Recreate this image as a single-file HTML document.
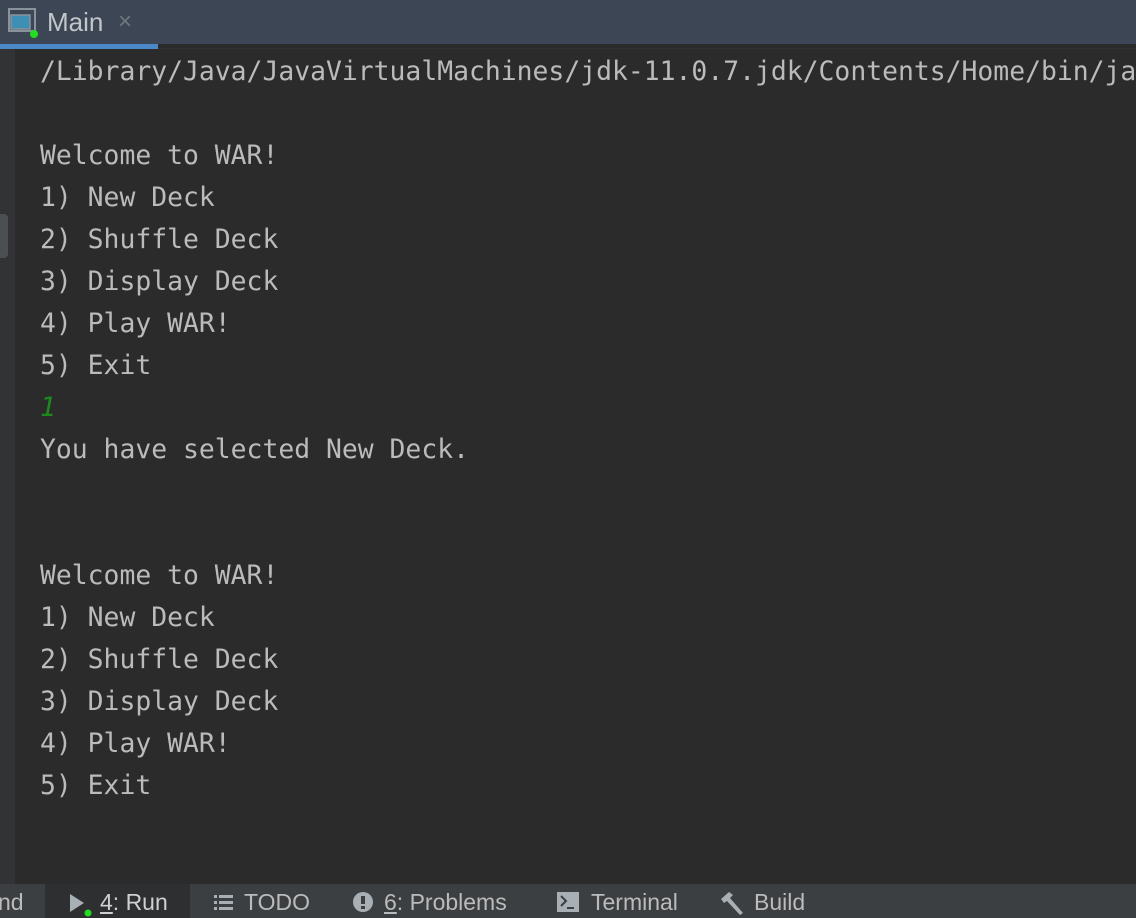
<!DOCTYPE html>
<html><head><style>
body{margin:0;width:1136px;height:918px;overflow:hidden;background:#2b2b2b;position:relative;font-family:"Liberation Sans",sans-serif}
#tabs{position:absolute;left:0;top:0;width:1136px;height:44px;background:#3d4655}
#ul{position:absolute;left:0;top:44px;width:158px;height:5px;background:#4a88c7}
#tabline{position:absolute;left:158px;top:48px;width:978px;height:1px;background:#323232}
#gutter{position:absolute;left:0;top:49px;width:15px;height:835px;background:#313335}
#thumb{position:absolute;left:0;top:214px;width:8px;height:44px;background:#4b4f52;border-radius:0 4px 4px 0}
pre{position:absolute;left:40px;top:51px;margin:0;font-family:"DejaVu Sans Mono","Liberation Mono",monospace;font-size:26.4px;line-height:42px;color:#bbbbbb;white-space:pre}
.g{color:#1e8a1e;font-style:italic}
#bot{position:absolute;left:0;top:884px;width:1136px;height:34px;background:#3c3f41;color:#bbbbbb;font-size:23px}
#bot span{position:absolute;top:5px}
</style></head><body>
<div id="tabs">
<svg style="position:absolute;left:8px;top:8px" width="30" height="30" viewBox="0 0 30 30"><rect x="1" y="1" width="26" height="22" fill="none" stroke="#8a939c" stroke-width="2"/><rect x="3" y="7" width="19" height="14" fill="#3f8fb5" stroke="#8a939c" stroke-width="1.5"/><circle cx="26" cy="26" r="4" fill="#22dd22"/></svg>
<span style="position:absolute;left:47px;top:7px;font-size:26px;color:#c3c6c9">Main</span>
<span style="position:absolute;left:118px;top:8px;font-size:24px;color:#6e7780">×</span>
</div>
<div id="ul"></div><div id="tabline"></div>
<div id="gutter"></div><div id="thumb"></div>
<pre>/Library/Java/JavaVirtualMachines/jdk-11.0.7.jdk/Contents/Home/bin/java

Welcome to WAR!
1) New Deck
2) Shuffle Deck
3) Display Deck
4) Play WAR!
5) Exit
<span class="g">1</span>
You have selected New Deck.


Welcome to WAR!
1) New Deck
2) Shuffle Deck
3) Display Deck
4) Play WAR!
5) Exit</pre>
<div id="bot">
<div style="position:absolute;left:45px;top:0;width:145px;height:34px;background:#2d2f30"></div>
<span style="left:-2px">nd</span>
<svg style="position:absolute;left:68px;top:10px" width="24" height="24"><polygon points="2,0 16,9 2,18" fill="#a9b0b5"/><circle cx="20" cy="19" r="3.5" fill="#22dd22"/></svg>
<span style="left:100px;color:#d0d0d0"><u>4</u>: Run</span>
<svg style="position:absolute;left:214px;top:10px" width="20" height="16"><rect x="0" y="1" width="3" height="3" fill="#a9b0b5"/><rect x="5" y="1" width="14" height="3" fill="#a9b0b5"/><rect x="0" y="7" width="3" height="3" fill="#a9b0b5"/><rect x="5" y="7" width="14" height="3" fill="#a9b0b5"/><rect x="0" y="13" width="3" height="3" fill="#a9b0b5"/><rect x="5" y="13" width="14" height="3" fill="#a9b0b5"/></svg>
<span style="left:244px">TODO</span>
<svg style="position:absolute;left:353px;top:8px" width="20" height="20"><circle cx="10" cy="10" r="10" fill="#a9b0b5"/><rect x="8" y="4" width="4" height="8" fill="#3c3f41"/><rect x="8" y="14" width="4" height="3" fill="#3c3f41"/></svg>
<span style="left:384px"><u>6</u>: Problems</span>
<svg style="position:absolute;left:557px;top:8px" width="22" height="20"><rect width="22" height="20" fill="#a9b0b5"/><path d="M4 4 L9 9 L4 14" stroke="#3c3f41" stroke-width="2" fill="none"/><rect x="10" y="15" width="7" height="2" fill="#3c3f41"/></svg>
<span style="left:591px">Terminal</span>
<svg style="position:absolute;left:719px;top:7px" width="26" height="24"><path d="M2 8 L10 1 L14 4 L11 7 L24 22 L21 24 L8 10 L5 12 Z" fill="#a9b0b5"/></svg>
<span style="left:754px">Build</span>
</div>
</body></html>
